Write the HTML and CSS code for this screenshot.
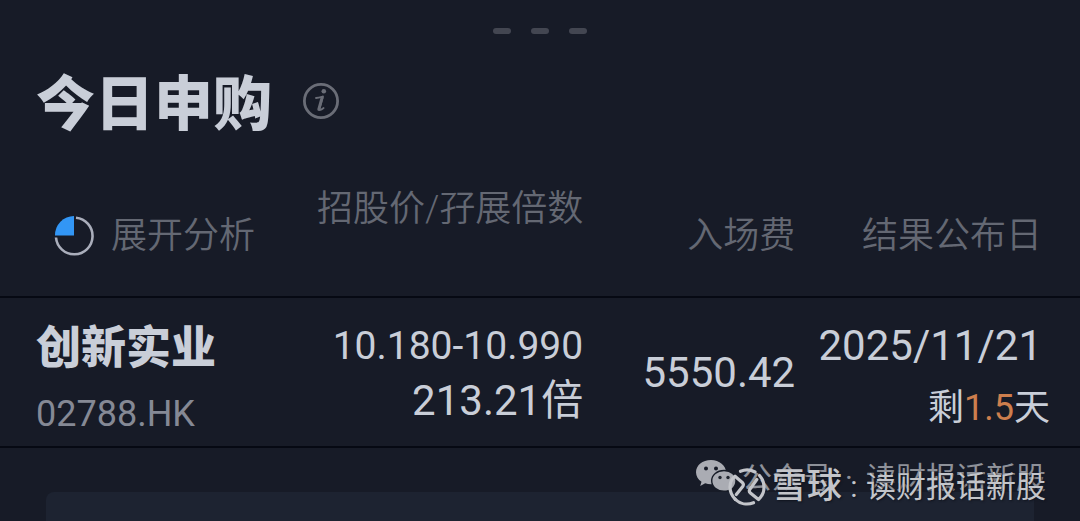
FILE: index.html
```
<!DOCTYPE html>
<html lang="zh-CN">
<head>
<meta charset="utf-8">
<meta name="viewport" content="width=device-width, initial-scale=1">
<title>今日申购</title>
<link rel="stylesheet" href="styles.css">
</head>
<body>
<main class="sheet">
  <div class="handle" aria-hidden="true"><span></span><span></span><span></span></div>
  <header class="heading">
    <h1 class="title">今日申购</h1>
    <button class="info" type="button" aria-label="说明">
      <svg viewBox="0 0 38 38" width="38" height="38" aria-hidden="true">
        <circle cx="19" cy="19" r="16.6" fill="none" stroke="currentColor" stroke-width="2.800"/>
        <circle cx="21.800" cy="9.200" r="2.300" fill="currentColor"/>
        <path d="M14 16C17 15.800 19 15 21 14.400L17.400 27C17 28.700 18.700 28.200 21.600 26" fill="none" stroke="currentColor" stroke-width="1.800" stroke-linejoin="round" stroke-linecap="round"/>
        <path d="M20 15.800L16.800 27.400" fill="none" stroke="currentColor" stroke-width="3" stroke-linecap="round"/>
      </svg>
    </button>
  </header>
  <table class="offers">
    <colgroup><col class="col-name"><col class="col-price"><col class="col-fee"><col class="col-date"></colgroup>
    <thead>
      <tr>
        <th scope="col">
          <button class="expand" type="button">
            <svg viewBox="0 0 40 40" width="40" height="40" aria-hidden="true">
              <path d="M22 1.800A18.300 18.300 0 1 1 2 21.500" fill="none" stroke="#aaaebb" stroke-width="2.600"/>
              <path d="M20 0v19.500H1A19.200 19.200 0 0 1 20 0z" fill="#3296f5"/>
            </svg>
            <span>展开分析</span>
          </button>
        </th>
        <th scope="col" class="raised">招股价/孖展倍数</th>
        <th scope="col">入场费</th>
        <th scope="col" class="last">结果公布日</th>
      </tr>
    </thead>
    <tbody>
      <tr>
        <td>
          <div class="name">创新实业</div>
          <div class="code">02788.HK</div>
        </td>
        <td>
          <div class="price">10.180-10.990</div>
          <div class="multiple">213.21倍</div>
        </td>
        <td class="fee">5550.42</td>
        <td class="last">
          <div class="date">2025/11/21</div>
          <div class="left">剩<span class="days">1.5</span>天</div>
        </td>
      </tr>
    </tbody>
  </table>
  <section class="bottom"><div class="card"></div></section>

  <div class="mark mark-account">
    <svg viewBox="0 0 40 36" width="40" height="36" aria-hidden="true">
      <path fill="#aaacb3" fill-rule="evenodd" d="M15 0C6.500 0 0 5.400 0 12.300c0 4 2.200 7.300 5.500 9.500L4.200 26l5-2.700c1.800.6 3.700 1 5.900 1 8.400 0 14.900-5.400 14.900-12S23.400 0 15 0zM10 6.500a2 2 0 1 1 0 4 2 2 0 0 1 0-4zm10 0a2 2 0 1 1 0 4 2 2 0 0 1 0-4z"/>
      <path fill="#aaacb3" stroke="#171c27" stroke-width="1.400" d="M28 10.500c-7 0-12.300 4.400-12.300 10.300S21 31.300 28 31.300c1.600 0 3-.2 4.400-.7l4.100 2.400-1-3.700c3-2 4.500-4.900 4.500-8.500 0-5.900-5-10.300-12-10.300z"/>
      <circle cx="24" cy="17.500" r="1.700" fill="#20252f"/><circle cx="32" cy="17.500" r="1.700" fill="#20252f"/>
    </svg>
    <span class="account-label">公众号</span><span class="sep">·</span><span>读财报话新股</span>
  </div>
  <div class="mark mark-brand">
    <svg viewBox="0 0 38 38" width="38" height="38" aria-hidden="true" fill="none" stroke="currentColor" stroke-width="3.200" stroke-linecap="round" stroke-linejoin="round">
      <path d="M12.500 3.300A17 17 0 0 1 27 4"/>
      <path d="M7.300 31.300A17 17 0 0 0 25.500 34.700"/>
      <path d="M7.300 31.300Q2 26 2 19T7 8.200L14.600 14.800Q16 16.300 14.900 18.200L8.300 26.500"/>
      <path d="M28.800 11.500L21.700 21.500Q20.600 23.400 22.400 24.900L30.500 31.500Q36 26.500 36 19.500T31.500 7.500"/>
    </svg>
    <span class="brand-label">雪球</span><span class="colon">:</span><span>读财报话新股</span>
  </div>
</main>
</body>
</html>
```
FILE: styles.css
```
* { box-sizing: border-box; }
html { background: #171b27; }
body {
  margin: 0;
  color: #c9ced8;
  font-family: Roboto, "Noto Sans CJK SC", sans-serif;
}
button {
  border: 0;
  padding: 0;
  background: none;
  color: inherit;
  font: inherit;
  cursor: pointer;
}
svg { display: block; flex: none; }
.sheet {
  position: relative;
  display: flex;
  flex-direction: column;
  min-height: 100vh;
  overflow: hidden;
}
.handle {
  display: flex;
  justify-content: center;
  gap: 20px;
  padding-top: 28px;
}
.handle span {
  width: 18px;
  height: 6px;
  border-radius: 3px;
  background: #434651;
}
.heading {
  display: flex;
  align-items: flex-start;
  gap: 30px;
  padding: 35px 36px 0;
}
.title {
  margin: 0;
  font-size: 59px;
  line-height: 72px;
  font-weight: 900;
}
.info { padding-top: 13px; color: #6a6d77; }
.offers {
  width: 100%;
  table-layout: fixed;
  border-collapse: collapse;
  text-align: right;
}
.col-name { width: 27%; }
.col-price { width: 27%; }
.col-fee { width: 20%; }
.col-date { width: 26%; }
.offers th, .offers td { padding: 0; white-space: nowrap; }
.offers tr > :first-child { text-align: left; padding-left: 36px; }
.offers tr > :nth-child(3) { padding-right: 4px; }
.offers th {
  height: 156px;
  padding-top: 73px;
  vertical-align: top;
  color: #646873;
  font-size: 36px;
  line-height: 44px;
  font-weight: 350;
}
.offers th.raised { padding-top: 46px; }
.offers tr { border-bottom: 2px solid #060913; }
.offers th.last { padding-right: 38px; }
.offers td { height: 150px; }
.offers td.last { padding-right: 30px; }
.expand {
  display: flex;
  align-items: center;
  gap: 17px;
  padding-left: 18px;
}
.name { padding-top: 18px; font-size: 45px; line-height: 66px; font-weight: 900; }
.code { color: #858995; font-size: 36px; line-height: 64px; font-weight: 400; }
.price { padding-top: 4px; font-size: 39px; line-height: 54px; }
.multiple { font-size: 42px; line-height: 56px; }
.fee { font-size: 42px; }
.date { padding-top: 8px; margin-right: 8px; font-size: 42px; line-height: 64px; }
.left { font-size: 36px; line-height: 60px; }
.days { color: #cd7e4d; }
.bottom {
  display: flex;
  flex: 1;
  padding: 44px 46px 0;
}
.card {
  flex: 1;
  border-radius: 8px 8px 0 0;
  background: #1d2331;
}
.mark {
  position: absolute;
  right: 34px;
  display: flex;
  align-items: center;
  font-size: 30px;
  line-height: 40px;
  white-space: nowrap;
}
.sep { width: 34px; text-align: center; }
.colon { width: 24px; text-align: center; }
.mark-account { bottom: 23px; color: #8e9199; font-weight: 400; }
.account-label { margin-left: 6px; }
.mark-brand {
  bottom: 14px;
  color: #c3c5ca;
  text-shadow: 1px 1px 2px #10141e;
}
.brand-label { margin-left: 6px; font-size: 35px; font-weight: 500; }
```
